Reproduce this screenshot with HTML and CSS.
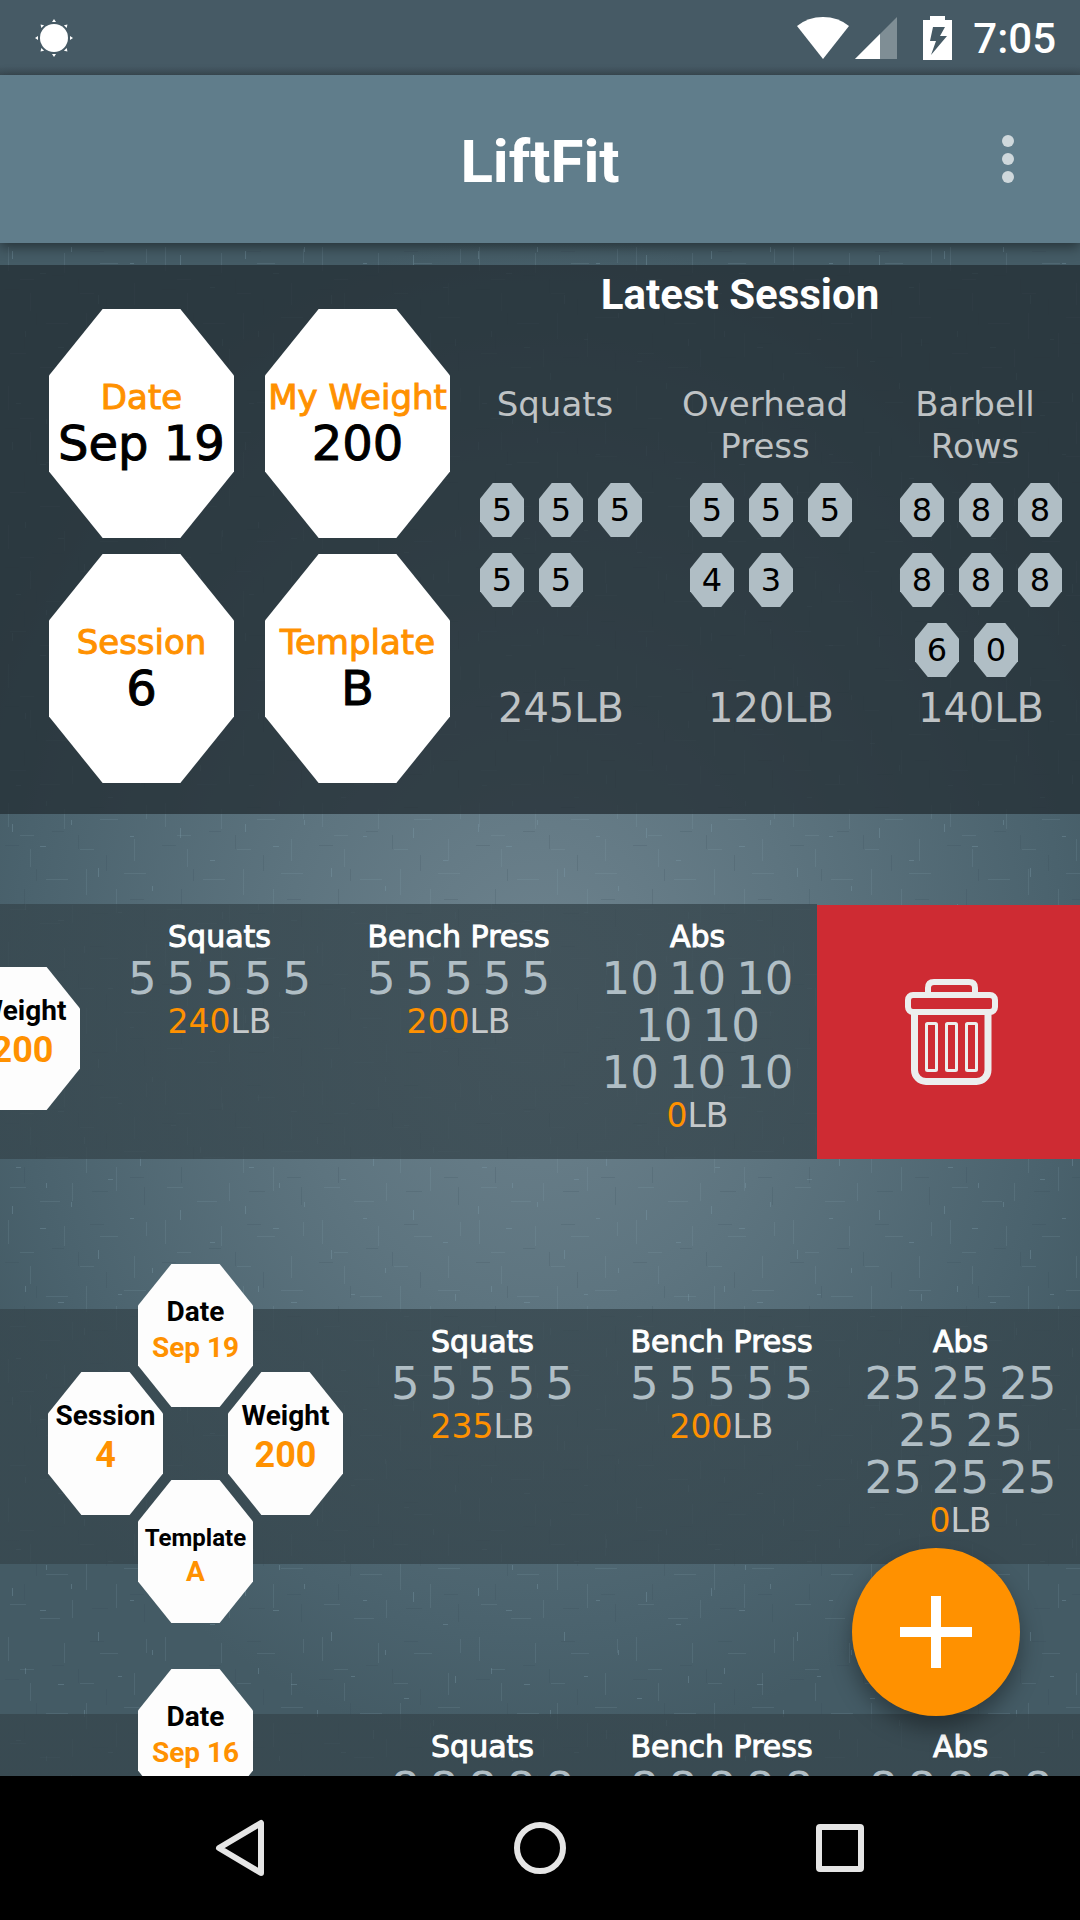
FILE: index.html
```html
<!DOCTYPE html>
<html lang="en">
<head>
<meta charset="utf-8">
<meta name="viewport" content="width=device-width, initial-scale=1">
<title>LiftFit</title>
<link rel="stylesheet" href="styles.css">
</head>
<body>
<div class="status">
  <svg width="40" height="40" viewBox="-20 -20 40 40" fill="#fff"><circle r="14"/><path d="M0-19l2 3h-4zM0 19l2-3h-4zM-19 0l3 2v-4zM19 0l-3 2v-4z"/><path transform="rotate(45)" d="M0-19l2 3h-4zM0 19l2-3h-4zM-19 0l3 2v-4zM19 0l-3 2v-4z"/></svg>
  <div class="status-right">
    <svg class="wifi" width="54" height="44" viewBox="0 0 54 44"><path fill="#fff" d="M27 43L1 10Q12 1 27 1T53 10z"/></svg>
    <svg class="signal" width="42" height="44" viewBox="0 0 42 44"><path fill="#7f8e95" d="M42 1V43H0z"/><path fill="#fff" d="M25 18V43H0z"/></svg>
    <svg class="battery" width="30" height="44" viewBox="0 0 30 44"><path fill="#fff" d="M7 0H22V4H29V44H0V4H7z"/><path fill="#465a65" d="M10 11H22L17 20H24L8 39L13 25H7z"/></svg>
    <span class="clock">7:05</span>
  </div>
</div>
<header class="appbar">
  <h1>LiftFit</h1>
  <button class="menu" aria-label="More options"><svg width="14" height="50" viewBox="0 0 14 50" fill="#cfd8dc"><circle cx="7" cy="7" r="6"/><circle cx="7" cy="25" r="6"/><circle cx="7" cy="43" r="6"/></svg></button>
</header>
<main>
  <svg class="texture" aria-hidden="true">
    <defs>
      <pattern id="weave" width="233" height="191" patternUnits="userSpaceOnUse">
        <path stroke="#7e9cab" stroke-opacity=".35" fill="none" d="M12.500 8v8M40 30.500h6M71.500 4v5M98.500 52v9M130 20.500h4M152.500 70v5M180.500 12v10M210 44.500h5M25.500 88v6M58 104.500h6M84.500 130v7M118 96.500h4M140.500 150v9M171 118.500h5M200.500 140v6M16 160.500h5M46.500 176v5M108 172.500h5M222.500 96v7"/>
      </pattern>
      <pattern id="weave-fine" width="157" height="139" patternUnits="userSpaceOnUse">
        <path stroke="#8aa8b6" stroke-opacity=".16" fill="none" d="M8.500 4v24M30.500 50v18M46 80.500h22M64.500 10v20M86.500 70v26M100 20.500h18M116.500 90v24M134.500 40v22M10 110.500h16M40 124.500h20M80 50.500h14M124 74.500h22M20 36.500h14M72.500 106v18M146.500 6v14"/>
        <path stroke="#2f454f" stroke-opacity=".16" fill="none" d="M5 46.500h14M24.500 90v16M52 32.500h12M78.500 36v14M92 114.500h16M106.500 56v16M130 100.500h14M144.500 110v18M90 8.500h14M36.500 70v12"/>
      </pattern>
    </defs>
    <rect width="100%" height="100%" fill="url(#weave-fine)"/>
    <rect width="100%" height="100%" fill="url(#weave)"/>
  </svg>
  <section class="latest">
    <div class="tiles">
      <div class="tile"><span>Date</span><b>Sep 19</b></div>
      <div class="tile"><span>My Weight</span><b>200</b></div>
      <div class="tile"><span>Session</span><b>6</b></div>
      <div class="tile"><span>Template</span><b>B</b></div>
    </div>
    <div class="summary">
      <h2>Latest Session</h2>
      <div class="lifts">
        <div class="lift">
          <h3>Squats</h3>
          <div class="sets">
            <div class="set-row"><i>5</i><i>5</i><i>5</i></div>
            <div class="set-row"><i>5</i><i>5</i></div>
          </div>
          <p>245LB</p>
        </div>
        <div class="lift">
          <h3>Overhead<br>Press</h3>
          <div class="sets">
            <div class="set-row"><i>5</i><i>5</i><i>5</i></div>
            <div class="set-row"><i>4</i><i>3</i></div>
          </div>
          <p>120LB</p>
        </div>
        <div class="lift">
          <h3>Barbell<br>Rows</h3>
          <div class="sets">
            <div class="set-row"><i>8</i><i>8</i><i>8</i></div>
            <div class="set-row"><i>8</i><i>8</i><i>8</i></div>
            <div class="set-row inset"><i>6</i><i>0</i></div>
          </div>
          <p>140LB</p>
        </div>
      </div>
    </div>
  </section>
  <ul class="history">
    <li class="swiped">
      <div class="entry">
        <div class="cluster">
          <div class="oct weight"><span>Weight</span><b>200</b></div>
        </div>
        <div class="cols">
          <div class="col"><h3>Squats</h3><div class="reps"><span>5</span><span>5</span><span>5</span><span>5</span><span>5</span></div><p><em>240</em>LB</p></div>
          <div class="col"><h3>Bench Press</h3><div class="reps"><span>5</span><span>5</span><span>5</span><span>5</span><span>5</span></div><p><em>200</em>LB</p></div>
          <div class="col"><h3>Abs</h3><div class="reps"><span>10</span><span>10</span><span>10</span></div><div class="reps"><span>10</span><span>10</span></div><div class="reps"><span>10</span><span>10</span><span>10</span></div><p><em>0</em>LB</p></div>
        </div>
      </div>
      <button class="delete" aria-label="Delete session"><svg width="93" height="106" viewBox="0 0 93 106" fill="none" stroke="#eceeee" stroke-width="6"><path d="M23 16V9q0-6 6-6h35q6 0 6 6v7"/><rect x="3" y="16" width="87" height="17" rx="5"/><path stroke-width="7" d="M9.500 34V91a11.500 11.500 0 0 0 11.500 11.500H71.500a11.500 11.500 0 0 0 11.500-11.500V34"/><g stroke-width="3"><rect x="21.500" y="44.500" width="10" height="47" rx="1"/><rect x="41.500" y="44.500" width="10" height="47" rx="1"/><rect x="61.500" y="44.500" width="10" height="47" rx="1"/></g></svg></button>
    </li>
    <li>
      <div class="entry">
        <div class="cluster">
          <div class="oct date"><span>Date</span><b>Sep 19</b></div>
          <div class="oct session"><span>Session</span><b>4</b></div>
          <div class="oct weight"><span>Weight</span><b>200</b></div>
          <div class="oct template"><span>Template</span><b>A</b></div>
        </div>
        <div class="cols">
          <div class="col"><h3>Squats</h3><div class="reps"><span>5</span><span>5</span><span>5</span><span>5</span><span>5</span></div><p><em>235</em>LB</p></div>
          <div class="col"><h3>Bench Press</h3><div class="reps"><span>5</span><span>5</span><span>5</span><span>5</span><span>5</span></div><p><em>200</em>LB</p></div>
          <div class="col"><h3>Abs</h3><div class="reps"><span>25</span><span>25</span><span>25</span></div><div class="reps"><span>25</span><span>25</span></div><div class="reps"><span>25</span><span>25</span><span>25</span></div><p><em>0</em>LB</p></div>
        </div>
      </div>
    </li>
    <li>
      <div class="entry">
        <div class="cluster">
          <div class="oct date"><span>Date</span><b>Sep 16</b></div>
        </div>
        <div class="cols">
          <div class="col"><h3>Squats</h3><div class="reps"><span>8</span><span>8</span><span>8</span><span>8</span><span>8</span></div></div>
          <div class="col"><h3>Bench Press</h3><div class="reps"><span>8</span><span>8</span><span>8</span><span>8</span><span>8</span></div></div>
          <div class="col"><h3>Abs</h3><div class="reps"><span>8</span><span>8</span><span>8</span><span>8</span><span>8</span></div></div>
        </div>
      </div>
    </li>
  </ul>
  <button class="fab" aria-label="Add session"><svg width="72" height="72" viewBox="0 0 72 72"><path fill="#fff" d="M31 0H41V31H72V41H41V72H31V41H0V31H31z"/></svg></button>
</main>
<nav class="navbar">
  <button aria-label="Back"><svg width="56" height="60" viewBox="0 0 56 60"><path fill="none" stroke="#e5e5e5" stroke-width="6" stroke-linejoin="round" d="M49 5V55L7 30z"/></svg></button>
  <button aria-label="Home"><svg width="56" height="60" viewBox="0 0 56 60"><circle cx="28" cy="30" r="23" fill="none" stroke="#e5e5e5" stroke-width="6"/></svg></button>
  <button aria-label="Recent apps"><svg width="56" height="60" viewBox="0 0 56 60"><rect x="7" y="9" width="42" height="42" rx="1" fill="none" stroke="#e5e5e5" stroke-width="6" stroke-linejoin="round"/></svg></button>
</nav>
</body>
</html>
```
FILE: styles.css
```css
* { box-sizing: border-box; margin: 0; padding: 0; }
body {
  display: flex;
  flex-direction: column;
  height: 100vh;
  overflow: hidden;
  font-family: "DejaVu Sans", sans-serif;
  background: #000;
}
button { display: flex; align-items: center; justify-content: center; border: 0; background: none; cursor: pointer; }
svg { display: block; flex: none; }
i, em { font-style: normal; }
h3, b { font-weight: 400; }

.status {
  flex: none;
  display: flex;
  align-items: center;
  justify-content: space-between;
  height: 75px;
  padding: 0 24px 0 34px;
  background: linear-gradient(#465a65 88%, #3d4e57);
}
.status-right { display: flex; align-items: center; }
.signal { margin-left: 5px; }
.battery { margin-left: 26px; }
.clock { margin-left: 20px; padding-top: 3px; font: 500 42px/50px Roboto, sans-serif; color: #fff; }

.appbar {
  flex: none;
  display: flex;
  align-items: center;
  justify-content: center;
  position: relative;
  z-index: 1;
  height: 168px;
  background: #607d8b;
  box-shadow: 0 4px 12px rgba(0, 0, 0, .45);
}
.appbar h1 { padding-top: 5px; font: 700 60px/70px Roboto, sans-serif; color: #fff; }
.menu { position: absolute; right: 48px; top: 0; width: 48px; height: 100%; }

main {
  flex: 1;
  min-height: 0;
  position: relative;
  overflow: hidden;
  padding-top: 22px;
  background: radial-gradient(ellipse 620px 760px at 50% 49%, #6e838e 0%, #5d747f 42%, #4a626d 85%, #445b65 100%);
}
.texture { position: absolute; inset: 0; width: 100%; height: 100%; }

.latest {
  position: relative;
  display: flex;
  height: 549px;
  background: rgba(38, 49, 55, .8);
}
.tiles {
  flex: none;
  display: grid;
  grid-template-columns: 185px 185px;
  grid-auto-rows: 229px;
  gap: 16px 31px;
  padding: 44px 0 0 49px;
}
.tile, .oct, .set-row i {
  display: flex;
  flex-direction: column;
  align-items: center;
  background: #fff;
  clip-path: polygon(29% 0, 71% 0, 100% 29%, 100% 71%, 71% 100%, 29% 100%, 0 71%, 0 29%);
}
.tile { padding-top: 67px; white-space: nowrap; -webkit-text-stroke-width: 1px; }
.tile span { font-size: 34px; line-height: 42px; color: #ff9100; }
.tile b { font-size: 48px; line-height: 50px; color: #000; }
.summary { flex: 1; padding-top: 5px; }
.summary h2 { padding-right: 50px; font: 700 42px/50px Roboto, sans-serif; text-align: center; color: #fff; }
.lifts { display: grid; grid-template-columns: repeat(3, 1fr); margin-top: 63px; color: #bfc3c5; }
.lift { text-align: center; }
.lift h3 { height: 84px; font-size: 34px; line-height: 42px; }
.sets { display: flex; flex-direction: column; gap: 16px; height: 194px; margin: 16px 0 6px 30px; }
.set-row { display: flex; gap: 15px; }
.set-row.inset { padding-left: 15px; }
.set-row i {
  justify-content: center;
  width: 44px;
  height: 54px;
  font-size: 32px;
  line-height: 54px;
  background: #b0bec5;
  color: #000;
}
.lift p { padding-left: 12px; font-size: 40px; line-height: 50px; }

.history { position: relative; margin-top: 45px; list-style: none; }
.history li { display: flex; height: 359px; margin-bottom: 46px; }
.entry {
  flex: 0 0 100%;
  display: flex;
  background: linear-gradient(rgba(54, 70, 77, .79), rgba(54, 70, 77, .79)) 0 45px / 100% 255px no-repeat;
}
.swiped .entry { margin-left: -263px; }
.cluster {
  flex: none;
  display: grid;
  grid-template-columns: 90px 25px 65px 25px 90px;
  grid-template-rows: 108px 35px 73px 35px 108px;
  margin: 0 20px 0 48px;
}
.oct { font: 700 28px/36px Roboto, sans-serif; background: #fdfdfd; }
.oct span { color: #000; }
.oct b { font-weight: 700; color: #ff9100; }
.date { grid-area: 1 / 2 / 3 / 5; padding-top: 30px; }
.session { grid-area: 2 / 1 / 5 / 3; padding-top: 26px; }
.weight { grid-area: 2 / 4 / 5 / 6; padding-top: 26px; }
.session b, .weight b { font-size: 36px; line-height: 42px; }
.template { grid-area: 4 / 2 / 6 / 5; padding-top: 40px; }
.template span { font-size: 24px; }
.template b { line-height: 32px; }
.cols { flex: 1; display: grid; grid-template-columns: repeat(3, 1fr); padding-top: 59px; text-align: center; }
.col h3 { font-size: 30px; line-height: 37px; color: #fff; white-space: nowrap; -webkit-text-stroke-width: 1px; }
.reps { display: flex; justify-content: center; gap: 10px; font-size: 45px; line-height: 47px; color: #b0bec5; }
.col p { font-size: 33px; line-height: 40px; color: #c5c9cb; }
.col em { color: #ff9100; }
.delete { flex: none; width: 263px; height: 254px; margin-top: 46px; padding-left: 6px; background: #ce2b33; }

.fab {
  position: absolute;
  right: 60px;
  bottom: 60px;
  width: 168px;
  height: 168px;
  border-radius: 50%;
  background: #ff9100;
  box-shadow: 0 12px 22px rgba(0, 0, 0, .35);
}

.navbar { flex: none; display: flex; justify-content: center; gap: 204px; height: 144px; background: #000; }
.navbar button { width: 96px; }
```
